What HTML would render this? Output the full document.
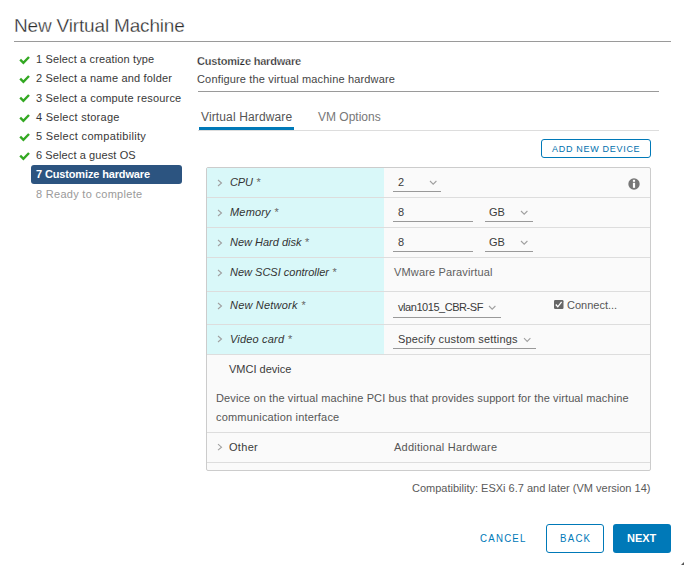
<!DOCTYPE html>
<html><head><meta charset="utf-8">
<style>
html,body{margin:0;padding:0;background:#fff;}
body{width:684px;height:565px;position:relative;overflow:hidden;font-family:"Liberation Sans",sans-serif;color:#333;}
.a{position:absolute;white-space:nowrap;line-height:1;}
.f11{font-size:11px;}
.hl{position:absolute;height:1px;}
.chev{position:absolute;width:6px;height:9px;}
.dd{position:absolute;width:9px;height:6px;}
.ul{position:absolute;height:1px;background:#999;}
.lab{font-style:italic;color:#333;}
.v{color:#3a3a3a;}
</style></head><body>

<!-- title -->
<div class="a" style="letter-spacing:-0.17px;left:14px;top:16px;font-size:19px;color:#2a2a2a;-webkit-text-stroke:0.3px #fff;">New Virtual Machine</div>
<div class="hl" style="left:14px;top:41px;width:657px;background:#9a9a9a;"></div>

<!-- sidebar -->
<div class="a f11" style="letter-spacing:0.14px;left:36px;top:54px;color:#383838;">1 Select a creation type</div>
<div class="a f11" style="letter-spacing:0.18px;left:36px;top:73px;color:#383838;">2 Select a name and folder</div>
<div class="a f11" style="letter-spacing:0.2px;left:36px;top:93px;color:#383838;">3 Select a compute resource</div>
<div class="a f11" style="letter-spacing:0.26px;left:36px;top:112px;color:#383838;">4 Select storage</div>
<div class="a f11" style="letter-spacing:0.31px;left:36px;top:131px;color:#383838;">5 Select compatibility</div>
<div class="a f11" style="letter-spacing:0.1px;left:36px;top:150px;color:#383838;">6 Select a guest OS</div>
<div style="position:absolute;left:31px;top:165px;width:151px;height:19px;background:#2c5480;border-radius:3px;"></div>
<div class="a f11" style="letter-spacing:-0.14px;left:36px;top:169px;color:#fff;font-weight:bold;">7 Customize hardware</div>
<div class="a f11" style="letter-spacing:0.29px;left:36px;top:189px;color:#9a9a9a;">8 Ready to complete</div>

<svg style="position:absolute;left:0;top:0" width="40" height="170">
<g fill="none" stroke="#33a822" stroke-width="2.4" stroke-linecap="butt">
<polyline points="20.2,59.6 23.4,62.8 29,57"/>
<polyline points="20.2,78.6 23.4,81.8 29,76"/>
<polyline points="20.2,97.6 23.4,100.8 29,95"/>
<polyline points="20.2,117.6 23.4,120.8 29,115"/>
<polyline points="20.2,136.6 23.4,139.8 29,134"/>
<polyline points="20.2,155.6 23.4,158.8 29,153"/>
</g></svg>

<!-- content header -->
<div class="a f11" style="letter-spacing:-0.2px;left:197px;top:56px;font-weight:bold;color:#2a2a2a;-webkit-text-stroke:0.25px #fff;">Customize hardware</div>
<div class="a f11" style="letter-spacing:0.16px;left:197px;top:74px;color:#454545;">Configure the virtual machine hardware</div>
<div class="hl" style="left:198px;top:91px;width:461px;background:#9a9a9a;"></div>

<!-- tabs -->
<div class="a" style="letter-spacing:0.13px;left:201px;top:111px;font-size:12px;color:#555;">Virtual Hardware</div>
<div class="a" style="left:318px;top:111px;font-size:12px;color:#777;">VM Options</div>
<div class="hl" style="left:198px;top:130px;width:461px;background:#ddd;"></div>
<div style="position:absolute;left:199px;top:127px;width:95px;height:3px;background:#0079b8;"></div>

<!-- add new device -->
<div style="position:absolute;left:541px;top:139px;width:108px;height:17px;border:1px solid #0079b8;border-radius:3px;"></div>
<div class="a" style="left:552px;top:145px;font-size:9px;letter-spacing:0.7px;color:#0070ad;">ADD NEW DEVICE</div>

<!-- table -->
<div style="position:absolute;left:206px;top:167px;width:443px;height:302px;border:1px solid #ccc;border-radius:2px;background:#fafafa;"></div>
<div style="position:absolute;left:207px;top:168px;width:177px;height:186px;background:#d9f8f9;"></div>
<div class="hl" style="left:207px;top:197px;width:443px;background:#ddd;"></div>
<div class="hl" style="left:207px;top:227px;width:443px;background:#ddd;"></div>
<div class="hl" style="left:207px;top:257px;width:443px;background:#ddd;"></div>
<div class="hl" style="left:207px;top:291px;width:443px;background:#ddd;"></div>
<div class="hl" style="left:207px;top:324px;width:443px;background:#ddd;"></div>
<div class="hl" style="left:207px;top:354px;width:443px;background:#ddd;"></div>
<div class="hl" style="left:207px;top:432px;width:443px;background:#ddd;"></div>
<div class="hl" style="left:207px;top:462px;width:443px;background:#ddd;"></div>

<svg style="position:absolute;left:0;top:0" width="684" height="565">
<g fill="none" stroke="#a0a0a0" stroke-width="1.1">
<polyline points="218,180.0 221.5,183.0 218,186.0"/>
<polyline points="218,210.0 221.5,213.0 218,216.0"/>
<polyline points="218,240.0 221.5,243.0 218,246.0"/>
<polyline points="218,270.0 221.5,273.0 218,276.0"/>
<polyline points="218,303.0 221.5,306.0 218,309.0"/>
<polyline points="218,336.0 221.5,339.0 218,342.0"/>
<polyline points="218,444.2 221.5,447.2 218,450.2"/>
<!-- select chevrons -->
<polyline points="430,181 433.2,184.2 436.4,181"/>
<polyline points="521,211 524.2,214.2 527.4,211"/>
<polyline points="521,241 524.2,244.2 527.4,241"/>
<polyline points="489,306 492.2,309.2 495.4,306"/>
<polyline points="524,338.2 527.2,341.4 530.4,338.2"/>
</g>
<circle cx="634" cy="184" r="5.7" fill="#777"/>
<rect x="632.9" y="179.8" width="2.2" height="2" fill="#fff"/>
<rect x="632.9" y="182.8" width="2.2" height="5" fill="#fff"/>
<!-- checkbox -->
<rect x="554" y="300" width="9.5" height="9" rx="1.2" fill="#666"/>
<polyline points="555.8,304.5 557.8,306.8 561.6,301.8" fill="none" stroke="#fff" stroke-width="1.3"/>
</svg>

<div class="a f11 lab" style="letter-spacing:-0.1px;left:230px;top:177px;">CPU <span style="color:#666">*</span></div>
<div class="a f11 lab" style="letter-spacing:0.18px;left:230px;top:207px;">Memory <span style="color:#666">*</span></div>
<div class="a f11 lab" style="left:230px;top:237px;">New Hard disk <span style="color:#666">*</span></div>
<div class="a f11 lab" style="left:230px;top:267px;">New SCSI controller <span style="color:#666">*</span></div>
<div class="a f11 lab" style="letter-spacing:0.2px;left:230px;top:300px;">New Network <span style="color:#666">*</span></div>
<div class="a f11 lab" style="letter-spacing:0.18px;left:230px;top:334px;">Video card <span style="color:#666">*</span></div>

<div class="a f11 v" style="left:398px;top:177px;">2</div>
<div class="ul" style="left:393px;top:191px;width:48px;"></div>
<div class="a f11 v" style="left:398px;top:207px;">8</div>
<div class="ul" style="left:393px;top:221px;width:80px;"></div>
<div class="a f11 v" style="left:489px;top:207px;">GB</div>
<div class="ul" style="left:485px;top:221px;width:48px;"></div>
<div class="a f11 v" style="left:398px;top:237px;">8</div>
<div class="ul" style="left:393px;top:251px;width:80px;"></div>
<div class="a f11 v" style="left:489px;top:237px;">GB</div>
<div class="ul" style="left:485px;top:251px;width:48px;"></div>
<div class="a f11" style="letter-spacing:0.15px;left:394px;top:267px;color:#606060;">VMware Paravirtual</div>
<div class="a f11 v" style="letter-spacing:-0.45px;left:398px;top:302px;">vlan1015_CBR-SF</div>
<div class="ul" style="left:393px;top:317px;width:108px;"></div>
<div class="a f11" style="left:567px;top:300px;color:#565656;">Connect...</div>
<div class="a f11 v" style="letter-spacing:0.18px;left:398px;top:334px;">Specify custom settings</div>
<div class="ul" style="left:393px;top:348px;width:143px;"></div>

<div class="a f11 v" style="left:229px;top:364px;">VMCI device</div>
<div class="a f11" style="letter-spacing:0.11px;left:216px;top:393px;color:#565656;">Device on the virtual machine PCI bus that provides support for the virtual machine</div>
<div class="a f11" style="letter-spacing:0.18px;left:216px;top:412px;color:#565656;">communication interface</div>
<div class="a f11 v" style="letter-spacing:0.3px;left:229px;top:442px;">Other</div>
<div class="a f11" style="letter-spacing:0.22px;left:394px;top:442px;color:#565656;">Additional Hardware</div>

<!-- footer -->
<div class="a f11" style="left:412px;top:483px;color:#5a5a5a;">Compatibility: ESXi 6.7 and later (VM version 14)</div>
<div class="a f11" style="left:480px;top:533px;color:#0079b8;letter-spacing:1.4px;transform:scaleX(0.88);transform-origin:0 0;">CANCEL</div>
<div style="position:absolute;left:546px;top:524px;width:56px;height:27px;border:1px solid #0079b8;border-radius:3px;"></div>
<div class="a f11" style="left:560px;top:533px;color:#0079b8;letter-spacing:1.4px;transform:scaleX(0.88);transform-origin:0 0;">BACK</div>
<div style="position:absolute;left:613px;top:524px;width:58px;height:29px;background:#0079b8;border-radius:3px;"></div>
<div class="a f11" style="left:627px;top:533px;color:#fff;font-weight:bold;">NEXT</div>

<svg style="position:absolute;left:680px;top:560px" width="4" height="5"><polygon points="4,2 4,5 1,5" fill="#555"/></svg>
</body></html>
